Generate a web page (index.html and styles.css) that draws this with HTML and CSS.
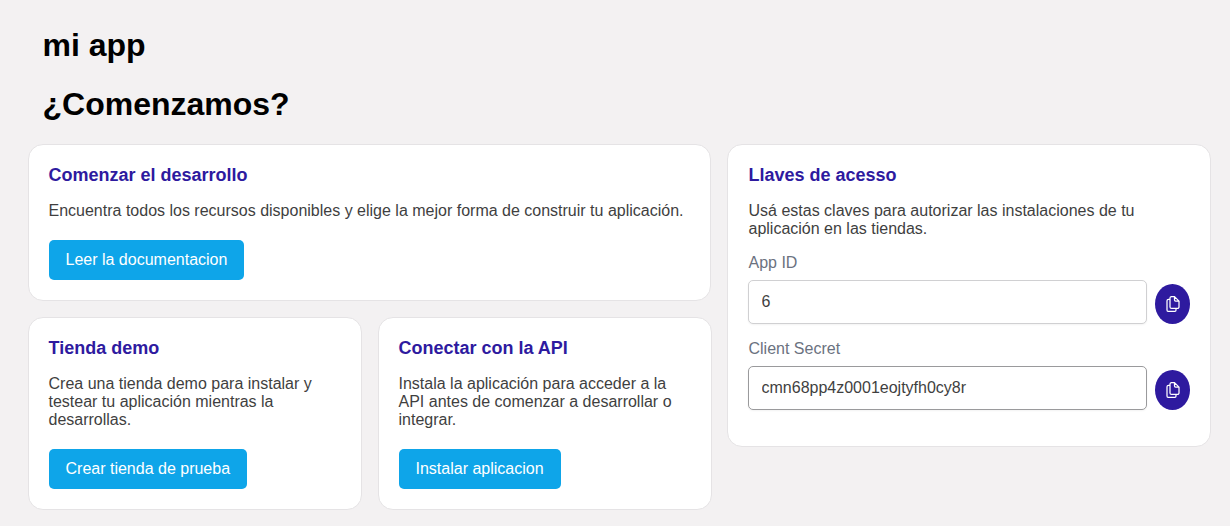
FILE: index.html
```html
<!DOCTYPE html>
<html lang="es">
<head>
  <meta charset="UTF-8">
  <meta name="viewport" content="width=device-width, initial-scale=1.0">
  <title>mi app</title>
  <link rel="stylesheet" href="styles.css">
</head>
<body>

  <header>
    <h1>mi app</h1>
    <h1>¿Comenzamos?</h1>
  </header>

  <main>
    <div class="left">
      <section class="card intro">
        <h2>Comenzar el desarrollo</h2>
        <p>Encuentra todos los recursos disponibles y elige la mejor forma de construir tu aplicación.</p>
        <button class="btn">Leer la documentacion</button>
      </section>

      <div class="row">
        <section class="card">
          <h2>Tienda demo</h2>
          <p>Crea una tienda demo para instalar y testear tu aplicación mientras la desarrollas.</p>
          <button class="btn">Crear tienda de prueba</button>
        </section>

        <section class="card">
          <h2>Conectar con la API</h2>
          <p>Instala la aplicación para acceder a la API antes de comenzar a desarrollar o integrar.</p>
          <button class="btn">Instalar aplicacion</button>
        </section>
      </div>
    </div>

    <section class="card keys">
      <h2>Llaves de acesso</h2>
      <p>Usá estas claves para autorizar las instalaciones de tu aplicación en las tiendas.</p>

      <label for="appId">App ID</label>
      <div class="field">
        <input type="text" id="appId" value="6" readonly>
        <button class="copy" aria-label="Copiar">
          <svg width="16" height="16" viewBox="0 0 16 16">
            <path d="M5 3.300H3.500A1.500 1.500 0 0 0 2 4.800v9.100A1.500 1.500 0 0 0 3.500 15.400H9.500a1.500 1.500 0 0 0 1.500-1.500V12.500"/>
            <path d="M9.500.600H6.500A1.500 1.500 0 0 0 5 2.100v8.800a1.500 1.500 0 0 0 1.500 1.500H12.500a1.500 1.500 0 0 0 1.500-1.500V5.100zV4a1.100 1.100 0 0 0 1.100 1.100H14"/>
          </svg>
        </button>
      </div>

      <label for="secret">Client Secret</label>
      <div class="field">
        <input type="text" id="secret" class="dark" value="cmn68pp4z0001eojtyfh0cy8r" readonly>
        <button class="copy" aria-label="Copiar">
          <svg width="16" height="16" viewBox="0 0 16 16">
            <path d="M5 3.300H3.500A1.500 1.500 0 0 0 2 4.800v9.100A1.500 1.500 0 0 0 3.500 15.400H9.500a1.500 1.500 0 0 0 1.500-1.500V12.500"/>
            <path d="M9.500.600H6.500A1.500 1.500 0 0 0 5 2.100v8.800a1.500 1.500 0 0 0 1.500 1.500H12.500a1.500 1.500 0 0 0 1.500-1.500V5.100zV4a1.100 1.100 0 0 0 1.100 1.100H14"/>
          </svg>
        </button>
      </div>
    </section>
  </main>

</body>
</html>
```
FILE: styles.css
```css
* {
  margin: 0;
  padding: 0;
  box-sizing: border-box;
}
body {
  font-family: "Liberation Sans", Arial, sans-serif;
  font-size: 16px;
  line-height: 18px;
  color: #3f3f3f;
  background: #f3f1f2;
  padding: 27px 19px 16px 28px;
}
header {
  padding-left: 14.5px;
}
h1 {
  color: #000;
  font-size: 32px;
  line-height: 37px;
  margin-bottom: 22px;
}
h2 {
  color: #2e1a9f;
  font-size: 18px;
  line-height: 20px;
  margin-bottom: 17px;
}

main {
  display: flex;
  align-items: flex-start;
  gap: 15px;
  margin-top: -1px;
}
.left {
  width: 684px;
}
.row {
  display: flex;
  gap: 16px;
  margin-top: 16px;
}
.card {
  flex: 1;
  background: white;
  border: 1px solid #e5e3e5;
  border-radius: 15px;
  padding: 20px 19.5px;
}
.intro {
  width: 683px;
}
.card p {
  margin-bottom: 20px;
}

.btn {
  display: block;
  height: 40px;
  padding: 0 17px;
  border: none;
  border-radius: 5px;
  background: #0ea5e9;
  color: white;
  font: inherit;
  cursor: pointer;
}

.keys {
  padding: 20px 20px 36px;
}
.keys h2, .keys p, label {
  padding-left: 0.5px;
}
.keys p {
  margin-bottom: 16px;
}
label {
  display: block;
  color: #6b7280;
  margin-bottom: 8px;
}
.field {
  display: flex;
  align-items: flex-end;
  gap: 8px;
}
.field + label {
  margin-top: 16px;
}
input {
  flex: 1;
  height: 44px;
  padding: 0 12.5px;
  border: 1px solid #d0d0d2;
  border-radius: 5px;
  box-shadow: 0 1px 2px rgba(0, 0, 0, 0.05);
  color: #3f3f3f;
  font: inherit;
  outline: none;
}
input.dark {
  border-color: #9a9a9c;
}
.copy {
  display: flex;
  justify-content: center;
  align-items: center;
  width: 35px;
  height: 40px;
  border: none;
  border-radius: 50%;
  background: #2e1a9f;
  cursor: pointer;
}
.copy svg {
  fill: none;
  stroke: white;
  stroke-width: 1.25;
  stroke-linejoin: round;
}
```
